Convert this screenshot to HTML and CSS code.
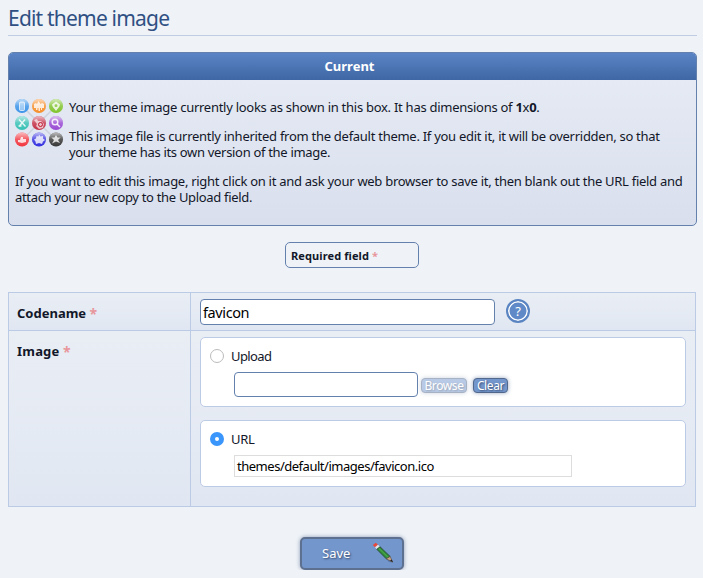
FILE: index.html
```html
<!DOCTYPE html>
<html lang="en">
<head>
<meta charset="utf-8">
<title>Edit theme image</title>
<link rel="stylesheet" href="styles.css">
</head>
<body>
<h1><span>Edit theme image</span></h1>
<section class="box">
  <h2>Current</h2>
  <div class="box-inner">
    <div class="media">
      <svg class="favicon" width="50" height="50" viewBox="0 0 50 50">
        <defs>
          <linearGradient id="shine" x1="0" y1="0" x2="0" y2="1">
            <stop offset="0" stop-color="#fff" stop-opacity=".7"/>
            <stop offset=".5" stop-color="#fff" stop-opacity=".25"/>
            <stop offset="1" stop-color="#fff" stop-opacity=".1"/>
          </linearGradient>
        </defs>
        <path d="M8 8 42 42M42 8 8 42" stroke="#cdd2dc" stroke-width="1.5"/>
        <circle cx="8" cy="8" r="7" fill="#2487e6"/><circle cx="25" cy="8" r="7" fill="#f58212"/><circle cx="42" cy="8" r="7" fill="#72bd16"/>
        <circle cx="8" cy="25" r="7" fill="#20b9ac"/><circle cx="25" cy="25" r="7" fill="#bd1933"/><circle cx="42" cy="25" r="7" fill="#8d34ce"/>
        <circle cx="8" cy="41.500" r="7" fill="#f01f2a"/><circle cx="25" cy="41.500" r="7" fill="#1d18dc"/><circle cx="42" cy="41.500" r="7" fill="#222"/>
        <g fill="url(#shine)"><circle cx="8" cy="8" r="7"/><circle cx="25" cy="8" r="7"/><circle cx="42" cy="8" r="7"/><circle cx="8" cy="25" r="7"/><circle cx="25" cy="25" r="7"/><circle cx="42" cy="25" r="7"/><circle cx="8" cy="41.500" r="7"/><circle cx="25" cy="41.500" r="7"/><circle cx="42" cy="41.500" r="7"/></g>
        <g fill="#fff" fill-opacity=".8">
          <rect x="5.500" y="4" width="5" height="8.500" rx="1" fill-opacity=".45" stroke="#fff" stroke-opacity=".7" stroke-width="1"/>
          <path d="M20 6l2-1 1 1 1.500-3 2 3 1.500-1 2 1v4h-2v2h-1v-2h-1v3h-1.500v-3h-1v2h-1.500v-2h-2z"/>
          <path fill-rule="evenodd" d="M42 13c-1-2-4-4-4-6.500l4-3 4 3c0 2.500-3 4.500-4 6.500zM42 6a1.500 1.500 0 1 0 0 3 1.500 1.500 0 0 0 0-3z"/>
          <path d="M20 22l3-1 1 2 3 0 3 3-1 4-4 1-3-3 1-2z" fill-opacity=".65"/>
          <path d="M4 42h2l1-3h2v2h3v3l-4 1-4-1z"/>
          <path d="M25 36.500l1.500 2 2.500-.5v2.500l2 1.500-2 1.500-1 2.500-3-1-3 1-.500-2.500-1.500-2 2-1 .5-2.500 2 .5z"/>
          <path d="M42 37l1.500 2.500h3l-2.500 2.500 2 3-4-1.500-4 2 2-3.500-2.500-2.500h3z"/>
        </g>
        <g fill="none" stroke="#fff" stroke-opacity=".85" stroke-width="1.500">
          <path d="M5 21.500l6.500 7M11 21.500l-6 7M4.500 28h3"/>
          <circle cx="41" cy="24" r="2.800"/><path d="M43 26l3 3"/>
        </g>
        <circle cx="26.500" cy="26.500" r="2" fill="none" stroke="#bd1933"/>
      </svg>
      <div class="media-text">
        <p><span class="l1">Your theme image currently looks as shown in this box. It has dimensions of <b>1</b>x<b>0</b>.</span></p>
        <p><span class="l2">This image file is currently inherited from the default theme. If you edit it, it will be overridden, so that</span><br><span class="l3">your theme has its own version of the image.</span></p>
      </div>
    </div>
    <p><span class="l4">If you want to edit this image, right click on it and ask your web browser to save it, then blank out the URL field and</span><br><span class="l5">attach your new copy to the Upload field.</span></p>
  </div>
</section>
<div class="required"><span class="req-text">Required field</span> <i class="star">*</i></div>
<form>
  <div class="row row-name">
    <div class="label"><span class="lb1">Codename</span> <i class="star">*</i></div>
    <div class="field name-field"><div class="input codename"><span>favicon</span></div><span class="help">?</span></div>
  </div>
  <div class="row row-image">
    <div class="label"><span class="lb2">Image</span> <i class="star">*</i></div>
    <div class="field choices">
      <div class="choice upload">
        <div class="option"><span class="radio"></span><span class="t-upload">Upload</span></div>
        <div class="controls"><div class="input file"></div><span class="btn browse">Browse</span><span class="btn clear">Clear</span></div>
      </div>
      <div class="choice url">
        <div class="option"><span class="radio on"></span><span class="t-url">URL</span></div>
        <div class="url-input"><span>themes/default/images/favicon.ico</span></div>
      </div>
    </div>
  </div>
</form>
<div class="save"><span>Save</span>
  <svg width="24" height="24" viewBox="0 0 24 24">
    <path d="M4 7l13 14 4 .500L8 5z" fill="#26395f" opacity=".35"/>
    <path d="M.8 4 3.800 1.700 6 3.800 3 6.300z" fill="#e8483c"/>
    <path d="M3 6.300 6 3.800 8 5.800 4.800 8.300z" fill="#dfe3e6"/>
    <path d="M4.800 8.300 8 5.800 18.200 15.500 14.300 17.800z" fill="#318a3b" stroke="#2a4a34" stroke-width=".8"/>
    <path d="M6.800 7.300 16 16.300" stroke="#55b552" stroke-width="1"/>
    <path d="M14.300 17.800 18.200 15.500 20.500 21z" fill="#c9a587" stroke="#594a3d" stroke-width=".6"/>
    <path d="M18 19.500 19.600 18.500 21 21.300z" fill="#222"/>
  </svg>
</div>
</body>
</html>
```
FILE: styles.css
```css
* { box-sizing: border-box; }
html { height: 578px; overflow: hidden; }
body {
  margin: 0;
  padding: 0 7px 0 8px;
  background: #eff3f8;
  color: #121729;
  font: 13px/16px "Noto Sans", "DejaVu Sans", sans-serif;
}
span { white-space: nowrap; }
p { margin: 0 0 13px; }
.l1 { letter-spacing: -.27px; }
.l2 { letter-spacing: -.275px; }
.l3 { letter-spacing: -.315px; }
.l4 { letter-spacing: -.28px; }
.l5 { letter-spacing: -.32px; }
h1 {
  height: 36px;
  margin: 0 -1px 16px 0;
  padding-top: 4px;
  width: 689px;
  border-bottom: 1px solid #c0cce4;
  color: #305083;
  font-size: 21px;
  font-weight: 400;
  letter-spacing: -.8px;
  line-height: 28px;
}
.box {
  width: 689px;
  height: 174px;
  border: 1px solid #6481ad;
  border-radius: 5px;
  overflow: hidden;
  background: linear-gradient(#e7ecf5, #d9dfed);
}
h2 {
  height: 27px;
  margin: 0;
  padding-right: 6px;
  background: linear-gradient(#5a84c5, #3f67a5);
  color: #fff;
  font-size: 13px;
  line-height: 27px;
  text-align: center;
}
.box-inner { padding: 19px 6px 0; }
.media { display: flex; height: 74px; }
.favicon { width: 50px; height: 50px; margin: -1px 4px 0 -1px; }
.media-text { padding-left: 1px; }
.required {
  width: 134px;
  height: 26px;
  margin: 16px 0 24px 277px;
  padding-left: 5px;
  border: 1px solid #6481ad;
  border-radius: 5px;
  font-size: 11px;
  font-weight: 700;
  line-height: 26px;
  white-space: nowrap;
}
.req-text { letter-spacing: .1px; }
.star { color: #e8969c; font-style: normal; font-weight: 700; }
form { width: 688px; border: 1px solid #bccbe5; }
.row { display: grid; grid-template-columns: 181px 1fr; background: linear-gradient(#e9eef5, #e1e7f2); }
.row-name { height: 38px; border-bottom: 1px solid #bccbe5; }
.row-image { height: 175px; }
.label { padding: 12px 0 0 8px; font-weight: 700; }
.label .star { font-size: 14px; line-height: 0; vertical-align: -1px; }
.lb2 { letter-spacing: .2px; }
.field { border-left: 1px solid #bccbe5; padding: 6px 9px; }
.name-field { display: flex; gap: 11px; }
.input { height: 26px; border: 1px solid #6481ad; border-radius: 4px; background: #fff; }
.codename { width: 295px; padding-left: 2px; color: #000; font-size: 14.500px; letter-spacing: -.4px; line-height: 25px; }
.help {
  width: 24px;
  height: 24px;
  border: 2px solid #5b85c2;
  border-radius: 50%;
  background: #5f8ac7;
  box-shadow: inset 0 0 0 1.500px #fff;
  color: #fff;
  font-size: 13px;
  line-height: 20px;
  text-align: center;
}
.choices { display: flex; flex-direction: column; gap: 13px; }
.choice { width: 486px; border: 1px solid #bccbe5; border-radius: 5px; background: #fff; padding: 10px 9px; }
.upload { height: 70px; }
.url { height: 67px; }
.option { display: flex; align-items: center; gap: 7px; height: 16px; }
.t-upload { letter-spacing: -.6px; }
.t-url { letter-spacing: -.3px; }
.radio { width: 14px; height: 14px; border: 1px solid #bbb; border-radius: 50%; background: #fff; }
.radio.on { border: 5px solid #3b96fb; }
.controls { display: flex; margin: 8px 0 0 24px; }
.file { width: 184px; height: 25px; }
.btn {
  height: 15px;
  margin: 6px 0 0 3px;
  border: 1px solid #52698d;
  border-radius: 4px;
  background: #7396cc;
  box-shadow: 0 0 4px #98a7c0;
  color: #fff;
  font-size: 12px;
  letter-spacing: -.4px;
  line-height: 13px;
  text-align: center;
  text-shadow: 1px 1px 2px #33476b;
}
.browse { width: 46px; opacity: .5; }
.clear { width: 35px; margin-left: 6px; }
.url-input {
  width: 338px;
  height: 22px;
  margin: 8px 0 0 24px;
  padding-left: 2px;
  border: 1px solid #ddd;
  color: #000;
  letter-spacing: -.48px;
  line-height: 21px;
}
.save {
  display: flex;
  width: 104px;
  height: 33px;
  margin: 30px 0 0 292px;
  padding: 2px 0 0 20px;
  border: 2px solid #5d7090;
  border-radius: 5px;
  background: #7396cc;
  box-shadow: 0 0 4px #8c9ab3;
  color: #fff;
  line-height: 25px;
  text-shadow: 1px 1px 2px #33476b;
}
.save span { width: 50px; }
```
